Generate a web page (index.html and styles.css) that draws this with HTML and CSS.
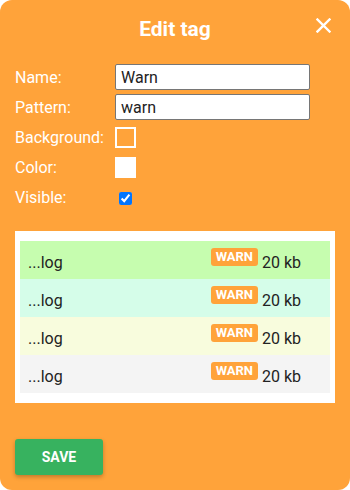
FILE: index.html
```html
<!DOCTYPE html>
<html lang="en">
  <head>
    <link rel="stylesheet" href="styles.css">
    <title>Edit tag</title>
  </head>
  <body>
    <div class="dialog">
      <div class="header">
        <h2 class="title">Edit tag</h2>
        <svg class="close" width="15" height="15" viewBox="0 0 15 15">
          <path d="M1.5 1.5 L13.5 13.5 M13.5 1.5 L1.5 13.5" stroke="#fff" stroke-width="2.4" stroke-linecap="square" />
        </svg>
      </div>

      <div class="form">
        <label class="label">Name:</label>
        <input class="text-input" type="text" value="Warn" />
        <label class="label">Pattern:</label>
        <input class="text-input" type="text" value="warn" />
        <label class="label">Background:</label>
        <span class="swatch swatch-bg"></span>
        <label class="label">Color:</label>
        <span class="swatch swatch-color"></span>
        <label class="label">Visible:</label>
        <span><input class="check" type="checkbox" checked /></span>
      </div>

      <div class="preview">
        <div class="row row-1">
          <span class="name">...log</span>
          <span class="badge">WARN</span>
          <span class="size">20 kb</span>
        </div>
        <div class="row row-2">
          <span class="name">...log</span>
          <span class="badge">WARN</span>
          <span class="size">20 kb</span>
        </div>
        <div class="row row-3">
          <span class="name">...log</span>
          <span class="badge">WARN</span>
          <span class="size">20 kb</span>
        </div>
        <div class="row row-4">
          <span class="name">...log</span>
          <span class="badge">WARN</span>
          <span class="size">20 kb</span>
        </div>
      </div>

      <button class="btn-save">SAVE</button>
    </div>
  </body>
</html>
```

FILE: styles.css
```css
body {
  margin: 0;
  background-color: #fff;
  font-family: Roboto, "Liberation Sans", sans-serif;
}

.dialog {
  height: 490px;
  box-sizing: border-box;
  background-color: #ffa33a;
  border-radius: 12px;
  padding: 0 15px;
  color: #fff;
}

.header {
  position: relative;
  height: 56px;
  display: flex;
  align-items: center;
  justify-content: center;
}

.title {
  margin: 0;
  font-size: 21px;
  font-weight: 700;
  padding-top: 2px;
}

.close {
  position: absolute;
  right: 4px;
  top: 18px;
}

.form {
  display: grid;
  grid-template-columns: 100px 195px;
  grid-auto-rows: 30px;
  align-items: center;
  margin-top: 6px;
}

.label {
  font-size: 16px;
}

.text-input {
  height: 26px;
  box-sizing: border-box;
  border: 1px solid #767676;
  border-radius: 2px;
  padding: 0 5px;
  font-family: Roboto, "Liberation Sans", sans-serif;
  font-size: 16px;
  color: #222;
}

.swatch {
  display: block;
  width: 21px;
  height: 21px;
  box-sizing: border-box;
}

.swatch-bg {
  border: 2px solid #fff;
  background-color: #ffa33a;
}

.swatch-color {
  background-color: #fff;
}

.check {
  margin: 0 0 0 4px;
  width: 13px;
  height: 13px;
  vertical-align: middle;
}

.preview {
  margin-top: 19px;
  background-color: #fff;
  padding: 10px 5px;
}

.row {
  height: 38px;
  display: flex;
  align-items: center;
  padding: 0 8px;
  color: #222;
  font-size: 16px;
}

.row-1 {
  background-color: #c6fdaf;
}

.row-2 {
  background-color: #d5fde9;
}

.row-3 {
  background-color: #f8fcdd;
}

.row-4 {
  background-color: #f4f4f4;
}

.name {
  flex: 1;
  padding-top: 4px;
}

.badge {
  background-color: #ffa33a;
  color: #fff;
  font-size: 13px;
  font-weight: 700;
  line-height: 18px;
  border-radius: 3px;
  padding: 0 5px;
  margin-right: 4px;
  align-self: flex-start;
  margin-top: 7px;
}

.size {
  width: 60px;
  padding-top: 4px;
}

.btn-save {
  margin-top: 36px;
  width: 88px;
  height: 36px;
  border: none;
  border-radius: 3px;
  background-color: #37b25f;
  color: #fff;
  font-family: Roboto, "Liberation Sans", sans-serif;
  font-size: 14px;
  font-weight: 700;
  box-shadow: 0 2px 4px rgba(0, 0, 0, 0.25);
  cursor: pointer;
}
```
